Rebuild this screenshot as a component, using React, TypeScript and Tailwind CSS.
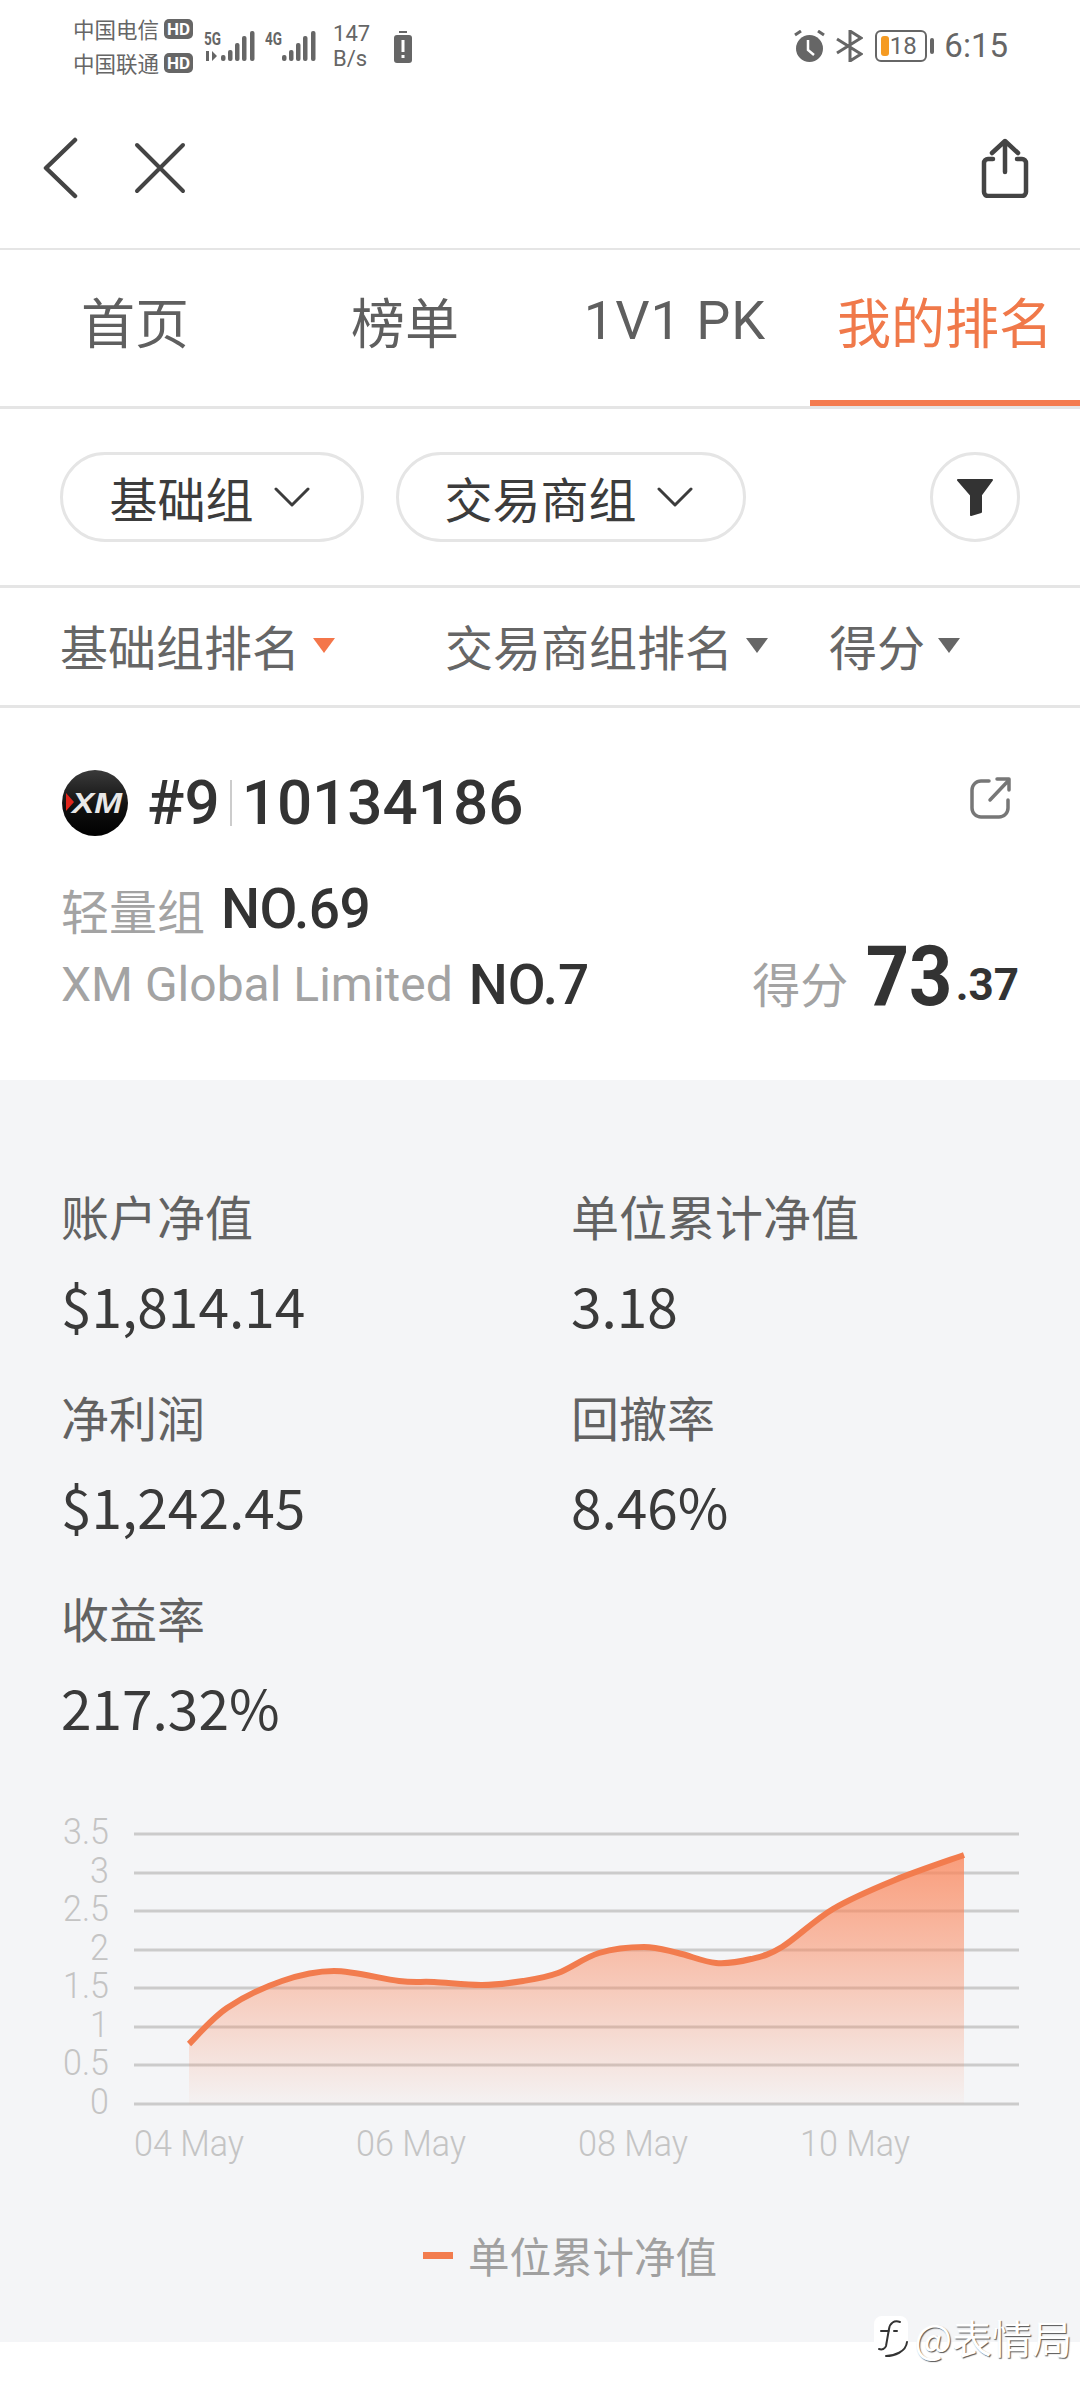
const CJK = "font-['Noto_Sans_CJK_SC',sans-serif]";
const ROBOTO = "font-['Roboto',sans-serif]";

const curve: [number, number][] = [
  [189, 245], [227, 209], [282, 182], [334, 172], [399, 182], [434, 183], [482, 186], [523, 182],
  [558, 174], [599, 154], [644, 148], [678, 154], [716, 164], [751, 160], [782, 148], [833, 110],
  [895, 81], [964, 56],
];

function smoothPath(points: [number, number][]) {
  let d = `M${points[0][0]} ${points[0][1]}`;
  for (let i = 0; i < points.length - 1; i++) {
    const p0 = points[Math.max(i - 1, 0)];
    const p1 = points[i];
    const p2 = points[i + 1];
    const p3 = points[Math.min(i + 2, points.length - 1)];
    const c1x = p1[0] + (p2[0] - p0[0]) / 6;
    const c1y = p1[1] + (p2[1] - p0[1]) / 6;
    const c2x = p2[0] - (p3[0] - p1[0]) / 6;
    const c2y = p2[1] - (p3[1] - p1[1]) / 6;
    d += ` C${c1x} ${c1y} ${c2x} ${c2y} ${p2[0]} ${p2[1]}`;
  }
  return d;
}

function Signal({ label, arrows }: { label: string; arrows?: boolean }) {
  return (
    <svg width="52" height="36" viewBox="0 0 52 36" fill="#666666">
      <text x="0" y="17" fontFamily="Roboto" fontSize="19" fontWeight="700" textLength="17" lengthAdjust="spacingAndGlyphs">{label}</text>
      {arrows ? <path d="M2 23h3v10H2zM8 23l5 5-5 5z" /> : null}
      <rect x="17" y="27" width="4.5" height="6" rx="2" />
      <rect x="24" y="22" width="4.5" height="11" rx="2" />
      <rect x="31" y="15" width="4.5" height="18" rx="2" />
      <rect x="38" y="8" width="4.5" height="25" rx="2" />
      <rect x="46" y="3" width="4.5" height="30" rx="2" />
    </svg>
  );
}

function StatusBar() {
  return (
    <div className="flex h-[100px] items-start text-[#666666]">
      <div className={`ml-[73px] mt-[17px] flex flex-col gap-[11px] ${CJK}`}>
        {["中国电信", "中国联通"].map((name) => (
          <div key={name} className="flex h-[23px] items-center gap-[5px] text-[21.5px] leading-[23px]">
            <span>{name}</span>
            <span className={`rounded-[5px] bg-[#666666] px-[3px] text-[17px] leading-[20px] font-bold text-white ${ROBOTO}`}>HD</span>
          </div>
        ))}
      </div>
      <div className="mt-[28px] ml-[11px] flex gap-[9px]">
        <Signal label="5G" arrows />
        <Signal label="4G" />
      </div>
      <div className={`mt-[21px] ml-[16px] flex w-[40px] flex-col items-start text-[22px] leading-[25px] ${ROBOTO}`}>
        <span>147</span>
        <span>B/s</span>
      </div>
      <svg className="mt-[31px] ml-[21px]" width="18" height="32" viewBox="0 0 18 32">
        <rect x="5" y="0" width="8" height="2" fill="#666666" />
        <rect x="0" y="4" width="18" height="28" rx="3" fill="#666666" />
        <rect x="7.5" y="9" width="3" height="12" fill="#ffffff" />
        <rect x="7.5" y="24" width="3" height="3" fill="#ffffff" />
      </svg>
      <div className="ml-auto mt-[30px] flex items-center">
        <svg width="33" height="32" viewBox="0 0 33 32">
          <circle cx="16.5" cy="18.5" r="13.5" fill="#666666" />
          <path d="M15 10v10l6 5" stroke="#ffffff" strokeWidth="2.5" fill="none" />
          <path d="M2 5l6-4M31 5l-6-4" stroke="#666666" strokeWidth="3" fill="none" />
        </svg>
        <svg className="ml-[10px]" width="27" height="32" viewBox="0 0 27 32" fill="none" stroke="#666666" strokeWidth="3">
          <path d="M1 9l24 15-11 7V1l11 7L1 23" />
        </svg>
        <div className={`relative ml-[12px] flex h-[32px] w-[52px] items-center justify-center rounded-[6px] border-[2px] border-[#666666] pl-[4px] text-[24px] leading-none ${ROBOTO}`}>
          <span className="absolute top-[4px] bottom-[4px] left-[4px] w-[8px] rounded-[3px] bg-[#f59b23]" />
          <span className="relative">18</span>
        </div>
        <div className="ml-[3px] h-[16px] w-[4px] rounded-[2px] bg-[#666666]" />
        <span className={`mr-[72px] ml-[10px] text-[33px] leading-[32px] ${ROBOTO}`}>6:15</span>
      </div>
    </div>
  );
}

function NavBar() {
  return (
    <div className="flex h-[148px] items-center pb-[12px] pl-[42px]">
      <svg width="36" height="62" viewBox="0 0 36 62" fill="none" stroke="#444444" strokeWidth="4.5" strokeLinecap="round" strokeLinejoin="round">
        <path d="M33 3L4 31l29 28" />
      </svg>
      <svg className="ml-[56px]" width="52" height="52" viewBox="0 0 52 52" fill="none" stroke="#444444" strokeWidth="4" strokeLinecap="round">
        <path d="M3 3l46 46M49 3L3 49" />
      </svg>
      <svg className="mr-[51px] ml-auto" width="48" height="60" viewBox="0 0 48 60" fill="none" stroke="#444444" strokeWidth="4.5" strokeLinecap="round" strokeLinejoin="round">
        <path d="M12 21H7a4 4 0 0 0-4 4v29a4 4 0 0 0 4 4h34a4 4 0 0 0 4-4V25a4 4 0 0 0-4-4h-5" />
        <path d="M24 4v30M11 15L24 3l13 12" />
      </svg>
    </div>
  );
}

function Tabs() {
  const tabs = ["首页", "榜单", "1V1 PK", "我的排名"];
  return (
    <div className="flex h-[161px] border-t-[2px] border-b-[3px] border-[#e5e5e5]">
      {tabs.map((tab, i) => (
        <div
          key={tab}
          className={`flex w-[270px] items-center justify-center text-[54px] leading-none ${
            i === 3 ? "border-b-[6px] border-[#f47b4f] pb-[8px] text-[#f0794a]" : "pb-[14px] text-[#5f5f5f]"
          } ${i === 2 ? `${ROBOTO} tracking-[1px]` : CJK}`}
        >
          {tab}
        </div>
      ))}
    </div>
  );
}

function Chevron() {
  return (
    <svg width="36" height="20" viewBox="0 0 36 20" fill="none" stroke="#3c3c3c" strokeWidth="3" strokeLinecap="round" strokeLinejoin="round">
      <path d="M2 2l16 16L34 2" />
    </svg>
  );
}

function SortItem({ label, active, className }: { label: string; active?: boolean; className: string }) {
  return (
    <div className={`flex items-center gap-[12px] ${className}`}>
      <span>{label}</span>
      <svg width="24" height="16" viewBox="0 0 24 16">
        <path d="M1 1h22L12 16z" fill={active ? "#f4764a" : "#666666"} />
      </svg>
    </div>
  );
}

function Stat({ label, value }: { label: string; value: string }) {
  return (
    <div className="h-[201px]">
      <div className="text-[48px] leading-[70px] text-[#626262]">{label}</div>
      <div className="mt-[18px] text-[55px] leading-[72px] text-[#3a3a3a]">{value}</div>
    </div>
  );
}

function Chart() {
  const gridY = [35, 74, 112, 151, 189, 228, 266, 305];
  const yLabels = ["3.5", "3", "2.5", "2", "1.5", "1", "0.5", "0"];
  const xLabels = [
    ["04 May", 134],
    ["06 May", 356],
    ["08 May", 578],
    ["10 May", 800],
  ] as const;
  const line = smoothPath(curve);
  return (
    <svg className="block" width="1080" height="372" viewBox="0 0 1080 372">
      <defs>
        <linearGradient id="area" x1="0" y1="0" x2="0" y2="1">
          <stop offset="0" stopColor="#fb8458" stopOpacity="0.78" />
          <stop offset="1" stopColor="#fb8458" stopOpacity="0.03" />
        </linearGradient>
      </defs>
      {gridY.map((y) => (
        <rect key={y} x="134" y={y - 1.5} width="885" height="3" fill="#cbcbcb" />
      ))}
      <path d={`${line} V305 H189 Z`} fill="url(#area)" />
      <path d={line} fill="none" stroke="#f27c4e" strokeWidth="6" />
      {gridY.map((y, i) => (
        <text key={y} transform={`translate(109 ${y + 10}) scale(0.92 1)`} textAnchor="end" fontFamily="Roboto,sans-serif" fontSize="37" fontWeight="300" fill="#c4c4c4">
          {yLabels[i]}
        </text>
      ))}
      {xLabels.map(([label, x]) => (
        <text key={label} x={x} y="357" fontFamily="Roboto,sans-serif" fontSize="37" fontWeight="300" fill="#c4c4c4" textLength="110" lengthAdjust="spacingAndGlyphs">
          {label}
        </text>
      ))}
    </svg>
  );
}

function LogoCard() {
  return (
    <svg width="68" height="68" viewBox="0 0 68 68">
      <defs>
        <linearGradient id="logo" x1="0" y1="0" x2="0" y2="1">
          <stop offset="0" stopColor="#3a3a3a" />
          <stop offset="0.55" stopColor="#111111" />
          <stop offset="1" stopColor="#000000" />
        </linearGradient>
      </defs>
      <circle cx="34" cy="34" r="33" fill="url(#logo)" />
      <path d="M5 24l8 9-8 9z" fill="#e0251b" />
      <text x="36" y="44" textAnchor="middle" fontFamily="'Liberation Sans',sans-serif" fontSize="29" fontWeight="700" fontStyle="italic" fill="#e8e8e8" textLength="50" lengthAdjust="spacingAndGlyphs">XM</text>
    </svg>
  );
}

export default function App() {
  return (
    <div className={`relative h-[2400px] w-[1080px] overflow-hidden bg-white ${CJK}`}>
      <StatusBar />
      <NavBar />
      <Tabs />

      <div className="flex h-[179px] items-center border-b-[3px] border-[#e5e5e5] px-[60px]">
        <div className="flex h-[90px] w-[304px] items-center justify-center gap-[20px] rounded-full border-[3px] border-[#e5e5e5] pr-[5px] text-[48px] text-[#3c3c3c]">
          <span>基础组</span>
          <Chevron />
        </div>
        <div className="ml-[32px] flex h-[90px] w-[350px] items-center justify-center gap-[20px] rounded-full border-[3px] border-[#e5e5e5] pr-[5px] text-[48px] text-[#3c3c3c]">
          <span>交易商组</span>
          <Chevron />
        </div>
        <div className="ml-auto flex size-[90px] items-center justify-center rounded-full border-[3px] border-[#e5e5e5]">
          <svg width="38" height="38" viewBox="0 0 38 38">
            <path d="M2 2h34L25 17v17l-10 3V17z" fill="#333333" stroke="#333333" strokeLinejoin="round" strokeWidth="2" />
          </svg>
        </div>
      </div>

      <div className="flex h-[120px] items-center border-b-[3px] border-[#e5e5e5] pb-[4px] text-[48px] text-[#666666]">
        <SortItem label="基础组排名" active className="ml-[60px]" />
        <SortItem label="交易商组排名" className="ml-[109px]" />
        <SortItem label="得分" className="ml-[60px]" />
      </div>

      <div className="h-[372px] px-[61px]">
        <div className="flex items-center pt-[61px]">
          <LogoCard />
          <div className={`ml-[18px] flex items-center text-[62px] leading-[68px] font-medium text-[#333333] ${ROBOTO}`}>
            <span>#9</span>
            <span className="mx-[10px] h-[46px] w-[2px] bg-[#cccccc]" />
            <span>10134186</span>
          </div>
          <svg className="mr-[6px] ml-auto -mt-[10px]" width="44" height="44" viewBox="0 0 44 44" fill="none" stroke="#777777" strokeWidth="3.5" strokeLinecap="round" strokeLinejoin="round">
            <path d="M20 5H12a9 9 0 0 0-9 9v18a9 9 0 0 0 9 9h18a9 9 0 0 0 9-9v-8" />
            <path d="M21 24L40 4M28 3h12v11" />
          </svg>
        </div>
        <div className="mt-[42px] flex h-[60px] items-center gap-[16px]">
          <span className="text-[48px] text-[#a3a3a3]">轻量组</span>
          <span className={`text-[55px] font-medium tracking-[-0.5px] text-[#333333] ${ROBOTO}`}>NO.69</span>
        </div>
        <div className="mt-[16px] flex h-[60px] items-center">
          <span className={`text-[48px] text-[#a3a3a3] ${ROBOTO}`}>XM Global Limited</span>
          <span className={`ml-[16px] text-[55px] font-medium text-[#333333] ${ROBOTO}`}>NO.7</span>
          <div className={`ml-auto flex items-baseline font-bold text-[#333333] ${ROBOTO}`}>
            <span className={`mr-[11px] -translate-y-[4px] text-[48px] font-normal text-[#a3a3a3] ${CJK}`}>得分</span>
            <span className="origin-right -translate-x-[3px] -translate-y-[2px] scale-x-[0.9] text-[84px] leading-[60px]">73</span>
            <span className="-translate-y-[7px] text-[44px] leading-[60px]">.37</span>
          </div>
        </div>
      </div>

      <div className="h-[1262px] bg-[#f4f5f7] pt-[100px]">
        <div className="grid grid-cols-[510px_1fr] pl-[61px]">
          <Stat label="账户净值" value="$1,814.14" />
          <Stat label="单位累计净值" value="3.18" />
          <Stat label="净利润" value="$1,242.45" />
          <Stat label="回撤率" value="8.46%" />
          <Stat label="收益率" value="217.32%" />
        </div>
        <div className="mt-[16px]">
          <Chart />
        </div>
        <div className="mt-[54px] flex items-center gap-[15px] pl-[423px]">
          <span className="h-[7px] w-[30px] bg-[#f27c4e]" />
          <span className="text-[41.5px] leading-[60px] text-[#a0a0a0]">单位累计净值</span>
        </div>
      </div>

      <div className="absolute top-[2313px] right-[8px] flex items-center text-white [text-shadow:1px_1px_1px_#555555]">
        <svg width="38" height="46" viewBox="0 0 38 46">
          <path d="M10 2h18a8 8 0 0 1 8 8v16c0 6-4 9-9 10l-9 8 2-8H10a8 8 0 0 1-8-8V10a8 8 0 0 1 8-8z" fill="#ffffff" />
          <path d="M28 8c-6-2-10 1-11 7l-3 17c-1 3-4 4-7 3M9 17h8M22 17h3M14 42c8 0 20-4 21-14" fill="none" stroke="#333333" strokeWidth="2" strokeLinecap="round" />
        </svg>
        <span className="ml-[4px] text-[40px] leading-[48px]">@表情局</span>
      </div>
    </div>
  );
}
